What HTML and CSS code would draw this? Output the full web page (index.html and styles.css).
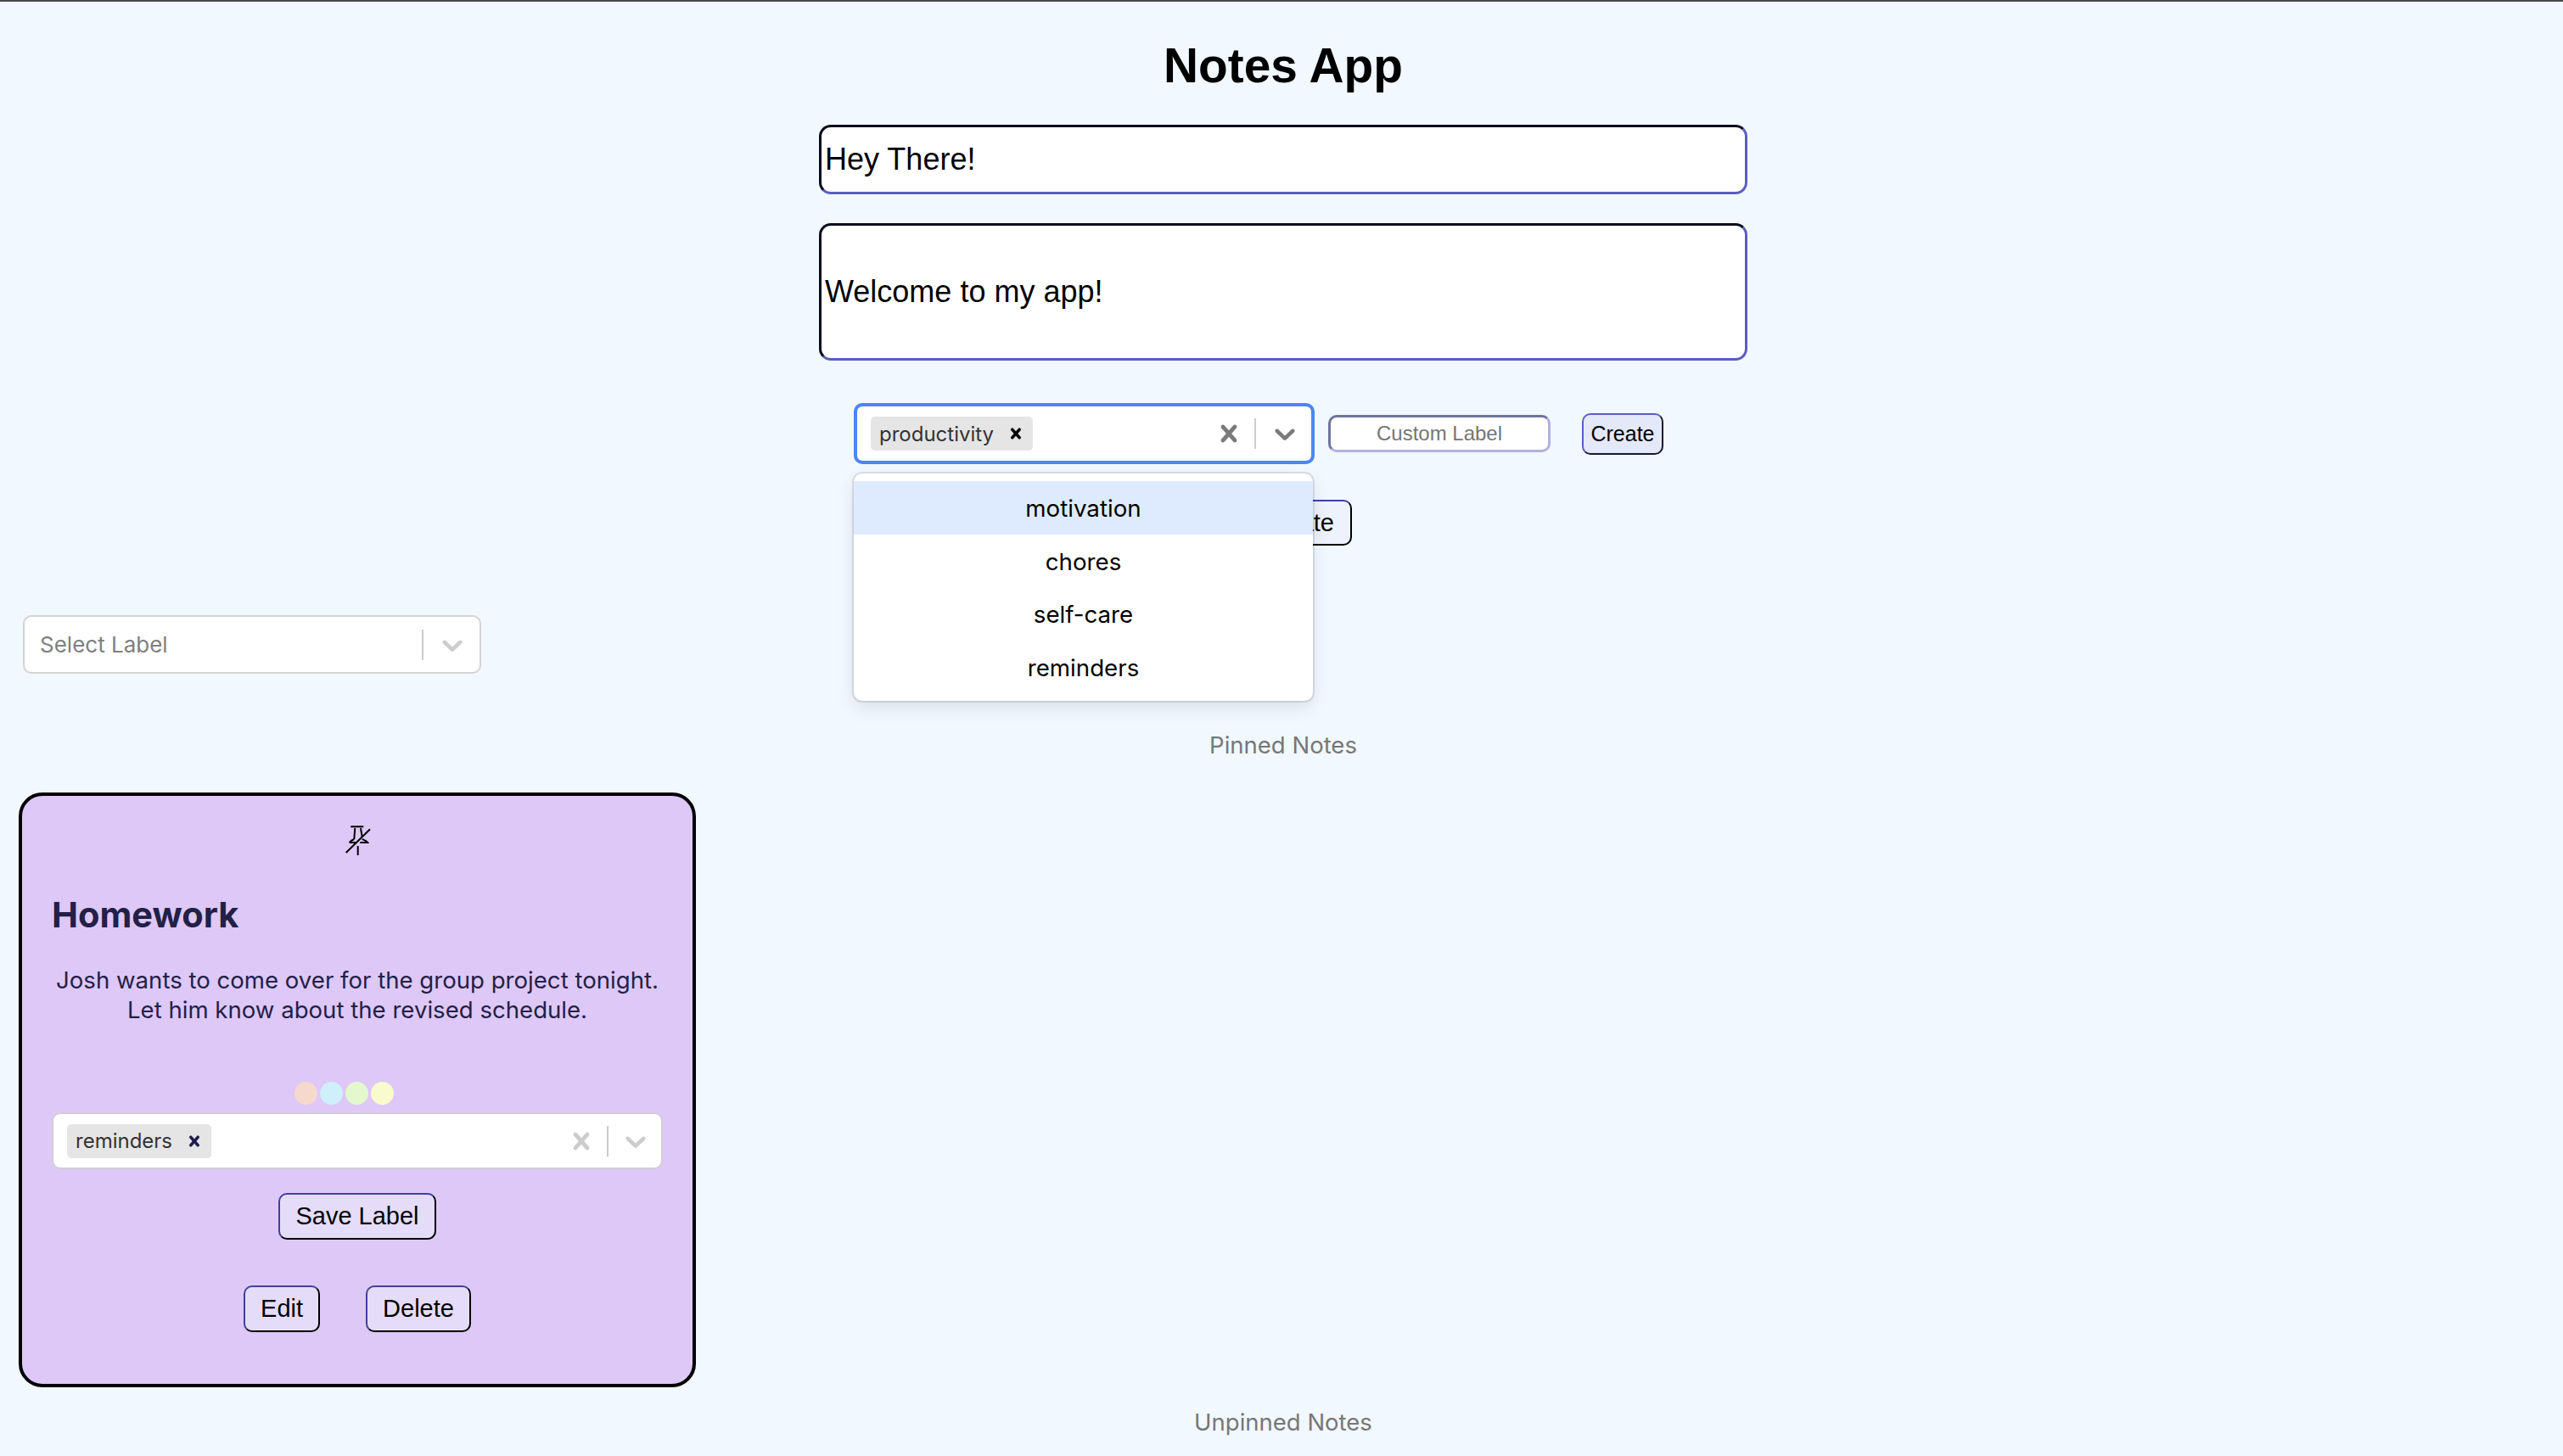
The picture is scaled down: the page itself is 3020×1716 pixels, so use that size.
FILE: index.html
```html
<!DOCTYPE html>
<html lang="en">
<head>
<meta charset="utf-8">
<title>Notes App</title>
<link rel="stylesheet" href="styles.css">
</head>
<body>
<main class="app">
  <h1 class="title">Notes App</h1>
  <form class="composer">
    <div class="field field-title">Hey There!</div>
    <div class="field field-body">Welcome to my app!</div>
    <div class="label-row">
      <div class="select select-focused">
        <div class="select-values"><span class="chip"><span class="chip-text">productivity</span><svg class="chip-x" viewBox="0 0 20 20"><path d="M14.348 14.849c-0.469 0.469-1.229 0.469-1.697 0l-2.651-3.030-2.651 3.029c-0.469 0.469-1.229 0.469-1.697 0-0.469-0.469-0.469-1.229 0-1.697l2.758-3.15-2.759-3.152c-0.469-0.469-0.469-1.228 0-1.697s1.228-0.469 1.697 0l2.652 3.031 2.651-3.031c0.469-0.469 1.228-0.469 1.697 0s0.469 1.229 0 1.697l-2.758 3.152 2.758 3.15c0.469 0.469 0.469 1.229 0 1.698z"/></svg></span></div>
        <svg class="sel-icon sel-clear" viewBox="0 0 20 20"><path d="M14.348 14.849c-0.469 0.469-1.229 0.469-1.697 0l-2.651-3.030-2.651 3.029c-0.469 0.469-1.229 0.469-1.697 0-0.469-0.469-0.469-1.229 0-1.697l2.758-3.15-2.759-3.152c-0.469-0.469-0.469-1.228 0-1.697s1.228-0.469 1.697 0l2.652 3.031 2.651-3.031c0.469-0.469 1.228-0.469 1.697 0s0.469 1.229 0 1.697l-2.758 3.152 2.758 3.15c0.469 0.469 0.469 1.229 0 1.698z"/></svg>
        <span class="sel-sep"></span>
        <svg class="sel-icon sel-chevron" viewBox="0 0 20 20"><path d="M4.516 7.548c0.436-0.446 1.043-0.481 1.576 0l3.908 3.747 3.908-3.747c0.533-0.481 1.141-0.446 1.576 0 0.436 0.445 0.408 1.197 0 1.615-0.406 0.418-4.695 4.502-4.695 4.502-0.217 0.223-0.502 0.335-0.789 0.335s-0.572-0.112-0.789-0.335c0 0-4.287-4.084-4.695-4.502s-0.436-1.17 0-1.615z"/></svg>
        <ul class="menu">
          <li class="menu-item menu-item-active">motivation</li>
          <li class="menu-item">chores</li>
          <li class="menu-item">self-care</li>
          <li class="menu-item">reminders</li>
        </ul>
      </div>
      <div class="custom-label">Custom Label</div>
      <button type="button" class="btn btn-create">Create</button>
    </div>
    <div class="submit-row"><button type="button" class="btn btn-submit">Create</button></div>
  </form>

  <div class="filter">
    <div class="select select-plain">
      <div class="select-values placeholder">Select Label</div>
      <span class="sel-sep"></span>
      <svg class="sel-icon sel-chevron" viewBox="0 0 20 20"><path d="M4.516 7.548c0.436-0.446 1.043-0.481 1.576 0l3.908 3.747 3.908-3.747c0.533-0.481 1.141-0.446 1.576 0 0.436 0.445 0.408 1.197 0 1.615-0.406 0.418-4.695 4.502-4.695 4.502-0.217 0.223-0.502 0.335-0.789 0.335s-0.572-0.112-0.789-0.335c0 0-4.287-4.084-4.695-4.502s-0.436-1.17 0-1.615z"/></svg>
    </div>
  </div>

  <h2 class="section-label section-pinned">Pinned Notes</h2>

  <article class="note">
    <div class="note-pin">
      <svg class="pin" viewBox="0 0 36 38"><path class="pin-line" d="M10.300 2.300h15M15.300 4l-1 13M22 4l1.700 10M8.700 21c1.300-2 3.300-3 5.600-4M8.700 21h9M23.700 17c2.300 1 5.300 2 6.600 4h-9M18.700 25v11"/><path class="pin-line" d="M4.700 33L33 5.300"/></svg>
    </div>
    <h3 class="note-title">Homework</h3>
    <p class="note-text">Josh wants to come over for the group project tonight. Let him know about the revised schedule.</p>
    <div class="swatches">
      <span class="swatch swatch-peach"></span><span class="swatch swatch-blue"></span><span class="swatch swatch-green"></span><span class="swatch swatch-yellow"></span>
    </div>
    <div class="select select-note">
      <div class="select-values"><span class="chip"><span class="chip-text">reminders</span><svg class="chip-x" viewBox="0 0 20 20"><path d="M14.348 14.849c-0.469 0.469-1.229 0.469-1.697 0l-2.651-3.030-2.651 3.029c-0.469 0.469-1.229 0.469-1.697 0-0.469-0.469-0.469-1.229 0-1.697l2.758-3.15-2.759-3.152c-0.469-0.469-0.469-1.228 0-1.697s1.228-0.469 1.697 0l2.652 3.031 2.651-3.031c0.469-0.469 1.228-0.469 1.697 0s0.469 1.229 0 1.697l-2.758 3.152 2.758 3.15c0.469 0.469 0.469 1.229 0 1.698z"/></svg></span></div>
      <svg class="sel-icon sel-clear" viewBox="0 0 20 20"><path d="M14.348 14.849c-0.469 0.469-1.229 0.469-1.697 0l-2.651-3.030-2.651 3.029c-0.469 0.469-1.229 0.469-1.697 0-0.469-0.469-0.469-1.229 0-1.697l2.758-3.15-2.759-3.152c-0.469-0.469-0.469-1.228 0-1.697s1.228-0.469 1.697 0l2.652 3.031 2.651-3.031c0.469-0.469 1.228-0.469 1.697 0s0.469 1.229 0 1.697l-2.758 3.152 2.758 3.15c0.469 0.469 0.469 1.229 0 1.698z"/></svg>
      <span class="sel-sep"></span>
      <svg class="sel-icon sel-chevron" viewBox="0 0 20 20"><path d="M4.516 7.548c0.436-0.446 1.043-0.481 1.576 0l3.908 3.747 3.908-3.747c0.533-0.481 1.141-0.446 1.576 0 0.436 0.445 0.408 1.197 0 1.615-0.406 0.418-4.695 4.502-4.695 4.502-0.217 0.223-0.502 0.335-0.789 0.335s-0.572-0.112-0.789-0.335c0 0-4.287-4.084-4.695-4.502s-0.436-1.17 0-1.615z"/></svg>
    </div>
    <div class="note-save"><button type="button" class="btn btn-note">Save Label</button></div>
    <div class="note-actions">
      <button type="button" class="btn btn-note">Edit</button>
      <button type="button" class="btn btn-note">Delete</button>
    </div>
  </article>

  <h2 class="section-label section-unpinned">Unpinned Notes</h2>
</main>
</body>
</html>
```
FILE: styles.css
```css
* { box-sizing: border-box; }
html, body { margin: 0; padding: 0; }
body {
  height: 1716px;
  overflow: hidden;
  background: #f1f8ff;
  border-top: 2px solid #444a4e;
  font-family: Inter, "Liberation Sans", sans-serif;
}
.app { display: flex; flex-direction: column; width: 3024px; }
.title {
  margin: 44px 0 37px;
  text-align: center;
  font: 700 56.800px/64px "Liberation Sans", Arial, sans-serif;
  color: #000;
}
.composer { width: 1094px; margin: 0 auto; display: flex; flex-direction: column; }
.field {
  display: flex;
  align-items: center;
  width: 100%;
  padding: 0 4px;
  background: #fff;
  border: 3px solid;
  border-color: #0a0a1e #5b5fc0 #5b5fc0 #0a0a1e;
  border-radius: 14px;
  font: 36px "Liberation Sans", Arial, sans-serif;
  color: #000;
}
.field-title { height: 82px; }
.field-body { height: 162px; margin-top: 34px; }
.label-row {
  display: flex;
  align-items: center;
  margin-top: 50px;
  padding-left: 41px;
  position: relative;
  z-index: 2;
}
.select {
  display: flex;
  align-items: center;
  background: #fff;
  border: 2px solid #d3d3d3;
  border-radius: 10px;
  position: relative;
}
.select-focused { width: 543px; height: 72px; border: 4px solid #4a86f7; padding: 0 11px 0 16px; }
.select-plain { width: 540px; height: 69px; padding: 0 12px 0 18px; }
.select-note { width: auto; height: 67px; padding: 0 10px 0 16px; margin: 9px -1px 0; border-color: #d2cdd8; }
.select-values { flex: 1; display: flex; align-items: center; min-width: 0; }
.placeholder { font-size: 26px; color: #808080; }
.chip {
  display: flex;
  align-items: center;
  height: 40px;
  padding: 0 8px 0 10px;
  background: #e5e5e5;
  border-radius: 5px;
  font-size: 24px;
  color: #333;
}
.chip-text { margin-right: 14px; }
.chip-x { width: 24px; height: 24px; fill: #000; stroke: #000; stroke-width: .7; }
.select-note .chip-x { fill: #1d1b4d; stroke: #1d1b4d; }
.sel-icon { width: 40px; height: 40px; fill: #7a7a7a; flex: none; }
.sel-clear { margin-right: 10px; }
.sel-chevron { margin-left: 14px; }
.select-note .sel-chevron { margin-left: 12px; }
.sel-sep { width: 2px; height: 36px; background: #ccc; flex: none; }
.select-plain .sel-icon, .select-note .sel-icon { fill: #ccc; }
.menu {
  position: absolute;
  top: 79px;
  left: -4px;
  width: 541px;
  margin: 0;
  padding: 9px 0;
  list-style: none;
  background: #fff;
  border-radius: 10px;
  box-shadow: 0 0 0 2px rgba(0, 0, 0, .1), 0 8px 22px rgba(0, 0, 0, .1);
}
.menu-item {
  height: 62.600px;
  padding-top: 2px;
  display: flex;
  align-items: center;
  justify-content: center;
  font-size: 27.700px;
  color: #000;
}
.menu-item-active { background: #deebff; }
.custom-label {
  width: 262px;
  height: 44px;
  margin-left: 16px;
  display: flex;
  align-items: center;
  justify-content: center;
  background: #fff;
  border: 3px solid;
  border-color: #72739c #b2b0e0 #b2b0e0 #72739c;
  border-radius: 10px;
  font: 24px "Liberation Sans", Arial, sans-serif;
  color: #757575;
}
.btn {
  font-family: "Liberation Sans", Arial, sans-serif;
  color: #000;
  border: 2px solid;
  border-color: #3f4199 #000 #000 #3f4199;
  border-radius: 10px;
  cursor: pointer;
}
.btn-create {
  width: 96px;
  height: 49px;
  margin-left: 37px;
  padding: 0;
  font-size: 25px;
  background: #e4e9fa;
  border-color: #5a5cc8 #17172f #17172f #5a5cc8;
}
.submit-row { display: flex; justify-content: center; margin-top: 42px; }
.btn-submit {
  width: 162px;
  height: 54px;
  padding: 0 19px;
  text-align: right;
  font-size: 29px;
  background: #eef2fc;
}
.filter { padding: 82px 0 0 27px; }
.section-label {
  margin: 0;
  text-align: center;
  font-weight: 400;
  font-size: 27.500px;
  line-height: 36px;
  color: #777;
}
.section-pinned { margin-top: 66px; }
.section-unpinned { margin-top: 23px; }
.note {
  width: 798px;
  height: 701px;
  margin: 38px 0 0 22px;
  padding: 34px 36px 0;
  background: #dec8f7;
  border: 4px solid #000;
  border-radius: 28px;
  color: #232048;
}
.note-pin { display: flex; justify-content: center; height: 38px; }
.pin { width: 36px; height: 38px; }
.pin-line { fill: none; stroke: #000; stroke-width: 2; }
.note-title { margin: 42px 0 0 -1px; font-size: 41.500px; line-height: 52px; font-weight: 700; }
.note-text { margin: 34px 0 0; text-align: center; font-size: 27.600px; line-height: 34.600px; }
.swatches { display: flex; justify-content: center; gap: 3px; margin-top: 68px; padding-right: 32px; }
.swatch { width: 27px; height: 27px; border-radius: 50%; }
.swatch-peach { background: #f6d9cc; }
.swatch-blue { background: #cff0fb; }
.swatch-green { background: #e3f9cd; }
.swatch-yellow { background: #f9fbcd; }
.note-save { display: flex; justify-content: center; margin-top: 28px; }
.btn-note { height: 55px; padding: 0 18px; font-size: 29px; background: #e5dcf9; }
.note-actions { display: flex; justify-content: center; gap: 54px; margin-top: 54px; }
```
